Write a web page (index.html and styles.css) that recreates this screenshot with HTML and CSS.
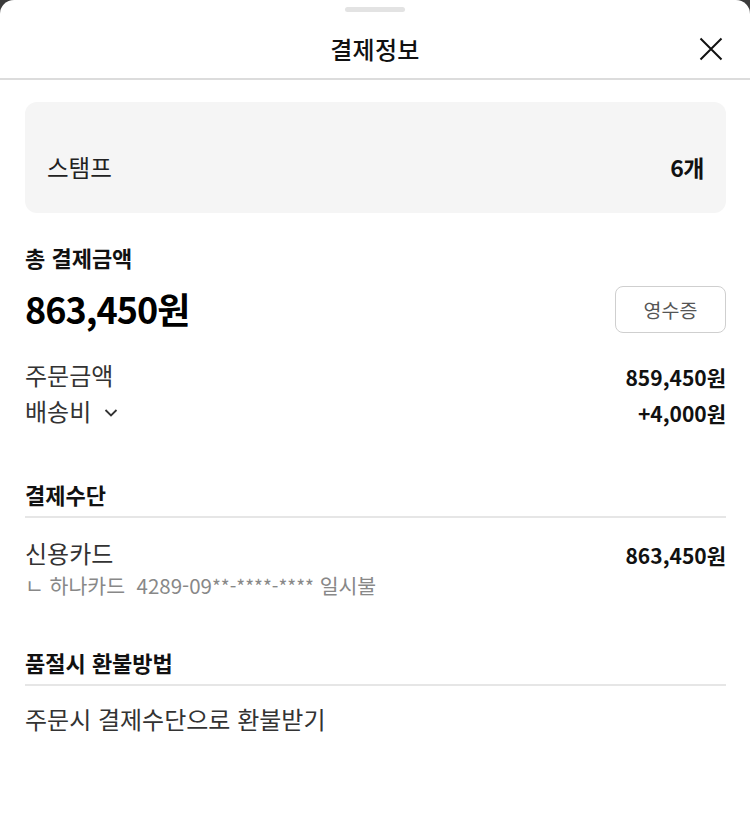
FILE: index.html
```html
<!DOCTYPE html>
<html lang="ko">
<head>
<meta charset="utf-8">
<link rel="stylesheet" href="styles.css">
</head>
<body>
<div class="sheet">
  <div class="handle"></div>
  <header class="header">
    <h1 class="title">결제정보</h1>
    <button class="close" aria-label="닫기">
      <svg width="24" height="24" viewBox="0 0 24 24"><path d="M1.5 1.5L22.5 22.5M22.5 1.5L1.5 22.5" stroke="#111" stroke-width="2" fill="none"/></svg>
    </button>
  </header>
  <main class="content">
    <div class="stamp-card">
      <span class="stamp-label">스탬프</span>
      <span class="stamp-value">6개</span>
    </div>

    <section class="total">
      <h2 class="sec-title">총 결제금액</h2>
      <div class="total-row">
        <span class="total-amount">863,450원</span>
        <button class="receipt">영수증</button>
      </div>
      <div class="line-row first">
        <span class="line-label">주문금액</span>
        <span class="line-value">859,450원</span>
      </div>
      <div class="line-row">
        <span class="line-label">배송비
          <svg class="chev" width="14" height="10" viewBox="0 0 14 10"><path d="M1.5 2L7 7.5L12.5 2" stroke="#333" stroke-width="1.8" fill="none"/></svg>
        </span>
        <span class="line-value">+4,000원</span>
      </div>
    </section>

    <section class="block pay-block">
      <h2 class="sec-title bordered">결제수단</h2>
      <div class="line-row pay">
        <span class="line-label">신용카드</span>
        <span class="line-value">863,450원</span>
      </div>
      <div class="sub">ㄴ 하나카드 &nbsp;4289-09<span class="mask">**-****-****</span> 일시불</div>
    </section>

    <section class="block refund-block">
      <h2 class="sec-title bordered">품절시 환불방법</h2>
      <p class="refund">주문시 결제수단으로 환불받기</p>
    </section>
  </main>
</div>
</body>
</html>
```
FILE: styles.css
```css
* { box-sizing: border-box; }
html, body { margin: 0; padding: 0; }
body {
  background: #3b3b3b;
  font-family: "Noto Sans CJK KR", "Noto Sans", sans-serif;
  color: #222;
  width: 750px;
  height: 818px;
  overflow: hidden;
}
.sheet {
  background: #fff;
  border-radius: 14px 14px 0 0;
  height: 818px;
  padding-top: 7px;
}
.handle {
  width: 60px;
  height: 5px;
  border-radius: 3px;
  background: #e3e3e3;
  margin: 0 auto;
}
.header {
  height: 68px;
  padding-top: 6px;
  display: flex;
  align-items: center;
  justify-content: center;
  border-bottom: 2px solid #dcdcdc;
  position: relative;
}
.title {
  margin: 0;
  font-size: 24px;
  font-weight: 500;
  color: #111;
  letter-spacing: 0.3px;
}
.close {
  position: absolute;
  right: 27px;
  top: 25px;
  background: none;
  border: 0;
  padding: 0;
  width: 24px;
  height: 24px;
}
.content {
  padding: 22px 24px 0 25px;
}
.stamp-card {
  background: #f5f5f5;
  border-radius: 12px;
  height: 111px;
  display: flex;
  justify-content: space-between;
  align-items: center;
  padding: 18px 22px 0 22px;
}
.stamp-label { font-size: 23.5px; color: #222; }
.stamp-value { font-size: 23px; font-weight: 700; color: #111; letter-spacing: -0.5px; }

.sec-title {
  margin: 0;
  font-size: 22px;
  font-weight: 700;
  color: #111;
  line-height: 30px;
}
.total { margin-top: 29px; }
.total-row {
  display: flex;
  justify-content: space-between;
  align-items: center;
  margin-top: 11px;
}
.total-amount {
  font-size: 36px;
  font-weight: 700;
  color: #000;
  letter-spacing: -1px;
  line-height: 46px;
}
.receipt {
  width: 111px;
  height: 47px;
  margin-top: 3px;
  border: 1px solid #cfcfcf;
  border-radius: 8px;
  background: #fff;
  font-family: inherit;
  font-size: 19.5px;
  color: #555;
}
.line-row {
  display: flex;
  justify-content: space-between;
  align-items: center;
  line-height: 36px;
  height: 36px;
}
.line-row.first { margin-top: 24px; }
.line-label {
  font-size: 24px;
  color: #333;
  display: flex;
  align-items: center;
  gap: 13px;
}
.line-value {
  font-size: 21px;
  font-weight: 700;
  color: #111;
  padding-top: 3px;
}
.chev { margin-top: 3px; }
.pay-block { margin-top: 50px; }
.refund-block { margin-top: 47px; }
.sec-title.bordered {
  padding-bottom: 7px;
  border-bottom: 2px solid #e6e6e6;
}
.line-row.pay { margin-top: 17px; }
.sub {
  font-size: 20.5px;
  color: #888;
  line-height: 28px;
}
.mask { font-size: 19px; }
.refund {
  margin: 16px 0 0;
  font-size: 24px;
  line-height: 34px;
  color: #333;
}
```
